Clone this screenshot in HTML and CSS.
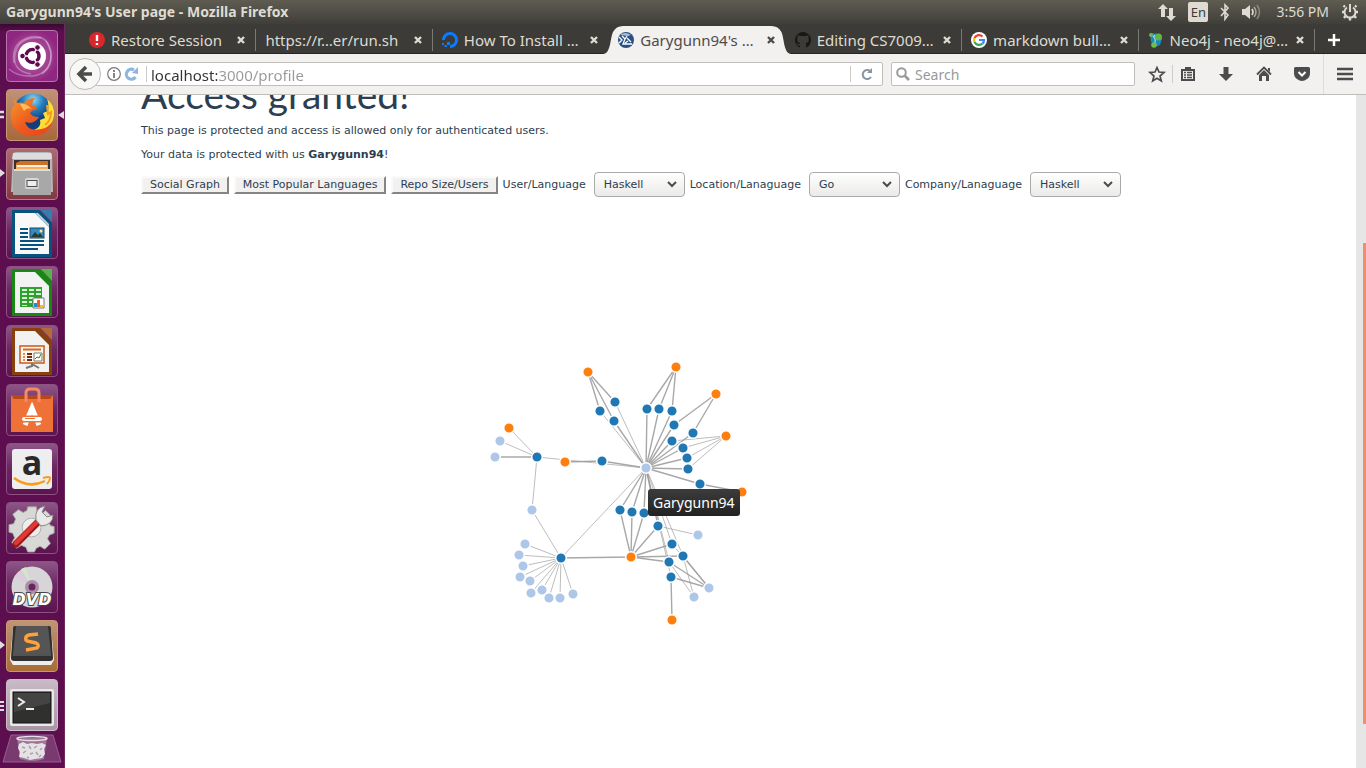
FILE: index.html
```html
<!DOCTYPE html>
<html lang="en">
<head>
<meta charset="utf-8">
<title>Garygunn94's User page</title>
<link rel="stylesheet" href="styles.css">
</head>
<body class="desktop">
<header class="topbar">
  <span class="window-title">Garygunn94's User page - Mozilla Firefox</span>
  <div class="indicators">
    <svg width="18" height="18" viewBox="0 0 18 18" fill="#dfdbd2"><path d="M5 1l5 5H7v8H3V6H0zM13 18l-5-5h3V5h4v8h3z"/></svg>
    <span class="keyboard">En</span>
    <svg width="10" height="18" viewBox="0 0 10 18" fill="none" stroke="#dfdbd2" stroke-width="1.6"><path d="M1 5l7 7-3 4V2l3 3-7 8"/></svg>
    <svg class="volume" width="20" height="18" viewBox="0 0 20 18" fill="none" stroke="#dfdbd2" stroke-width="1.6"><path d="M1 6h3l5-4v14l-5-4H1z" fill="#dfdbd2" stroke="none"/><path d="M11 6q2 3 0 6"/><path d="M13 4q4 5 0 10" opacity=".6"/><path d="M16 2q5 7 0 14" opacity=".4"/></svg>
    <span class="clock">3:56 PM</span>
    <svg width="18" height="18" viewBox="0 0 18 18" fill="none" stroke="#dfdbd2"><path d="M6 4.500a5.500 5.500 0 1 0 6 0" stroke-width="2"/><path d="M9 1v8" stroke-width="2"/><path d="M4 4L2.500 2.500M14 4l1.500-1.500M3 9H1M15 9h2M4.500 13L3 15M13.500 13l1.500 2M9 15v2.500" stroke-width="2.400"/></svg>
  </div>
</header>
<div class="workspace">
  <nav class="launcher" aria-label="Launcher">
    <button class="tile dash" aria-label="Dash"><svg width="50" height="50" viewBox="0 0 50 50"><g fill="none" stroke="#fff" stroke-opacity=".3" stroke-width="1.500"><path d="M7 32Q4 13 20 7Q39 1 44 20"/><path d="M24 43Q5 40 8 23Q12 5 34 7"/><path d="M44 20Q45 42 26 45Q11 46 2 38"/><path d="M39 10Q51 31 35 43"/></g><circle cx="25" cy="25" r="14" fill="#fff"/><circle cx="25.500" cy="25" r="6.500" fill="none" stroke="#5e0b50" stroke-width="3.500"/><path d="M25.500 25L16 25M25.500 25l5-9M25.500 25l5 9" stroke="#fff" stroke-width="1.500"/><circle cx="25.500" cy="25" r="4.500" fill="#fff"/><g fill="#5e0b50" stroke="#fff"><circle cx="15.500" cy="25" r="2.800"/><circle cx="30.500" cy="16.500" r="2.800"/><circle cx="30.500" cy="33.500" r="2.800"/></g></svg></button>
    <button class="tile firefox" aria-label="Firefox"><svg class="mark-left" width="5" height="10"><path d="M0 2h4M0 7h4" stroke="#ddd" stroke-width="2.500"/></svg><svg width="50" height="50" viewBox="0 0 50 50"><defs><radialGradient id="globe" cx=".5" cy=".15"><stop offset="0" stop-color="#8edcf8"/><stop offset=".5" stop-color="#2680bd"/><stop offset="1" stop-color="#123e7d"/></radialGradient><linearGradient id="fox" x2="1" y2="1"><stop offset="0" stop-color="#f79a2c"/><stop offset=".5" stop-color="#ee5b1e"/><stop offset="1" stop-color="#e8401b"/></linearGradient></defs><circle cx="26" cy="24" r="20.500" fill="url(#globe)"/><path d="M40 9q2 5 1 12l-5 2 2 5-5 2q2 7-6 10l8 3q10-6 12-17Q48 15 40 9z" fill="#ffdd39"/><path d="M7 7q-1 4 1 7Q2 21 4 29q2 15 20 17 16 1 22-15-5 7-12 8-13 3-16-7 9 3 14-5-7 0-9-4 2-3 7-4-1-3-5-4 0-4 3-7-7 0-11 5-4-1-6 0Q7 11 7 7z" fill="url(#fox)"/><path d="M13 14q6-1 12 5-5-2-8 2z" fill="#ffbc57"/><path d="M40 15l1 9 3-2q0 9-6 13" stroke="#f79c1a" stroke-width="2" fill="none"/></svg><svg class="mark-right" width="6" height="8"><path d="M6 0v8L0 4z" fill="#ddd"/></svg></button>
    <button class="tile files" aria-label="Files"><svg class="mark-left" width="5" height="8"><path d="M0 0v8l5-4z" fill="#ddd"/></svg><svg width="50" height="50" viewBox="0 0 50 50"><path d="M6 5q1-2 3-2h32q3 0 4 2l1 38H4z" fill="#b7b7b7"/><path d="M6 4h38l1 6H5z" fill="#ddd"/><path d="M7 11h36v12H7z" fill="#3b302b"/><path d="M9 14l4-2h28v11H9z" fill="#d06f28"/><path d="M9 16h32v8H9z" fill="#f5b15a"/><path d="M10 17h30" stroke="#fff0da" stroke-width="2"/><path d="M6 22q0-2 2-2h34q2 0 2 2v24H6z" fill="#a8a8a8"/><path d="M7 21h36" stroke="#ddd" stroke-width="2"/><rect x="18" y="29" width="14" height="11" rx="2" fill="#d7d7d7"/><rect x="20" y="31.500" width="10" height="6" fill="#eee" stroke="#4e4e4e"/></svg></button>
    <button class="tile" aria-label="Writer"><svg width="50" height="50" viewBox="0 0 50 50"><path d="M7 2h26l12 13v34H5V2z" fill="#07527e"/><path d="M8 5h20l14 14v27H8z" fill="#f8f8f8"/><path d="M28 5l14 14V16L31 5z" fill="#b9d3e1"/><path d="M34 2h11v12z" fill="#347db0"/><path d="M13 21h8M13 25h8M13 29h8M13 33h24M13 37h24M13 41h18" stroke="#07527e" stroke-width="2"/><rect x="23" y="20" width="14" height="10" fill="#348bc2" stroke="#174568"/><path d="M24 29l4-5 3 3 2-2 3 4z" fill="#273d32"/><circle cx="34" cy="23" r="1.500" fill="#ffe47c"/></svg></button>
    <button class="tile" aria-label="Calc"><svg width="50" height="50" viewBox="0 0 50 50"><path d="M7 2h26l12 13v34H5V2z" fill="#188815"/><path d="M8 5h20l14 14v27H8z" fill="#f2f2f2"/><path d="M34 2h11v12z" fill="#58b34b"/><path d="M13 20h22v20H13z" fill="#2da12d"/><path d="M15 22h5v2h-5zM22 22h5v2h-5zM29 22h5v2h-5zM15 26h5v2h-5zM22 26h5v2h-5zM29 26h5v2h-5zM15 30h5v2h-5zM22 30h5v2h-5zM15 34h5v2h-5zM22 34h3v2h-3zM15 38h5v1h-5z" fill="#d9f4d7"/><path d="M26 31h11v10H26z" fill="#fff" stroke="#777"/><path d="M27 36h3v4h-3z" fill="#198ed0"/><path d="M30 33h3v7h-3z" fill="#ed6223"/><path d="M33 38h3v2h-3z" fill="#f6be25"/></svg></button>
    <button class="tile" aria-label="Impress"><svg width="50" height="50" viewBox="0 0 50 50"><path d="M7 2h26l12 13v34H5V2z" fill="#88400f"/><path d="M8 5h20l14 14v27H8z" fill="#f2f2f2"/><path d="M34 2h11v12z" fill="#b66b37"/><path d="M13 20h24v17H13z" fill="#fff7ef" stroke="#c8591b" stroke-width="1.500"/><path d="M16 23.500h18" stroke="#d6662c" stroke-width="2"/><path d="M16 28h2M16 31h2M16 34h2" stroke="#e48b5c" stroke-width="2"/><path d="M20 28h5M20 31h5M20 34h5" stroke="#712d13" stroke-width="2"/><path d="M27 27h8v8h-8z" fill="#fff" stroke="#71806e"/><path d="M28 33l2-2 2 1 2-4" fill="none" stroke="#238a34"/><path d="M25 37v3l-6 2M25 38l7 4" fill="none" stroke="#777" stroke-width="2"/></svg></button>
    <button class="tile" aria-label="Ubuntu Software"><svg width="50" height="50" viewBox="0 0 50 50"><path d="M4 10h42v37H4z" fill="#ee7138"/><path d="M4 10h42l-3 4H7z" fill="#b94819"/><path d="M19 17V8q0-4 4-4h5q4 0 4 4v9" fill="none" stroke="#f58b61" stroke-width="3"/><path d="M18 40l7-17 7 17" fill="none" stroke="#fff" stroke-width="5"/><path d="M15 34h20" stroke="#ee7138" stroke-width="7"/><path d="M17 34h16" stroke="#fff" stroke-width="4" stroke-linecap="round"/><path d="M18 33.500h10" stroke="#ee7138"/></svg></button>
    <button class="tile" aria-label="Amazon"><svg width="50" height="50" viewBox="0 0 50 50"><rect x="5" y="5" width="40" height="40" rx="3" fill="#eee"/><text x="25" y="31" text-anchor="middle" class="amazon-mark">a</text><path d="M7 34q15 11 31 3" fill="none" stroke="#fa9d16" stroke-width="2.500"/><path d="M36 34q7-2 7 0 0 3-3 6" fill="none" stroke="#fa9d16" stroke-width="2"/></svg></button>
    <button class="tile" aria-label="System Settings"><svg width="50" height="50" viewBox="0 0 50 50"><g transform="translate(2 1) scale(.94)"><path d="M20 3h9l1 6 4 2 5-4 6 6-3 5 2 5 4 1v7l-5 2-2 4 3 5-6 6-5-3-4 2-2 4h-7l-2-5-5-2-5 3-5-6 3-5-2-5-4-1v-8l5-1 2-5-3-5 6-5 5 3 4-2z" fill="#d8d8d6" stroke="#a5a5a5"/><circle cx="24" cy="25" r="10" fill="#eee" stroke="#aaa"/></g><path d="M9 41L34 16" stroke="#9a1515" stroke-width="7" stroke-linecap="round"/><path d="M9 40L32 17" stroke="#e43732" stroke-width="4.500" stroke-linecap="round"/><path d="M29 17q-2-12 9-14l-3 6 5 5 6-2q0 10-12 11z" fill="#e9e9e7" stroke="#888"/></svg></button>
    <button class="tile" aria-label="DVD"><svg width="50" height="50" viewBox="0 0 50 50"><circle cx="25" cy="25" r="20.500" fill="#d7d5d8"/><path d="M25 25L8 14l7-7z" fill="#dfc9df"/><path d="M25 25L14 7l5-2z" fill="#d0e7c9"/><path d="M25 25L35 43l7-7z" fill="#eee"/><circle cx="25" cy="25" r="7" fill="#a98fa9"/><circle cx="25" cy="25" r="3.500" fill="#6b2461"/><text x="25" y="43" text-anchor="middle" class="dvd-mark">DVD</text></svg></button>
    <button class="tile sublime" aria-label="Sublime Text"><svg class="mark-left" width="5" height="8"><path d="M0 0v8l5-4z" fill="#ddd"/></svg><svg width="50" height="50" viewBox="0 0 50 50"><path d="M6 6h38l3 33-3 5H6l-3-5z" fill="#eee"/><path d="M8 5h34q2 0 2 2l2 30q0 3-3 3H7q-3 0-3-3L6 7q0-2 2-2z" fill="#303030"/><path d="M9 5h32l3 28H6z" fill="#555"/><path d="M6 34h38" stroke="#777"/><path d="M31 13l-9 1q-4 1-3 5l1 1 9 2q4 2 1 5l-11 2" fill="none" stroke="#ffa13b" stroke-width="3.500"/></svg></button>
    <button class="tile terminal" aria-label="Terminal"><svg class="mark-left" width="5" height="12"><path d="M0 2h4M0 6h4M0 10h4" stroke="#ddd" stroke-width="2"/></svg><svg width="50" height="50" viewBox="0 0 50 50"><rect x="3" y="9" width="44" height="37" rx="2" fill="#e9e9e7"/><rect x="6" y="12" width="38" height="31" fill="#30312f" stroke="#111"/><path d="M7 13h36v10L7 32z" fill="#444"/><path d="M11 18l6 4-6 4M19 29h8" fill="none" stroke="#eee" stroke-width="2"/></svg></button>
    <button class="trash" aria-label="Trash"><svg width="60" height="30" viewBox="0 0 60 30"><path d="M9 1h42l8 27H1z" fill="#7a3a70" stroke="#965f8e"/><path d="M15 4h30l-3 21q-12 4-24 0z" fill="#a783a2" opacity=".8"/><path d="M17 10l4-2 4 2 5-1 5 1 5-1 4 2-2 4 1 5-3 4-7 1-5 1-6-2-5-1 1-5-2-4z" fill="#e6e1e5"/><path d="M20 13l3 1M27 12l2 3M35 12l-3 2M40 14l-2 2M21 19l3-2M28 20l3-1M36 21l-2-3M25 23l2 1M39 21l-2 2" fill="none" stroke="#aaa1aa" stroke-width="1.500"/><ellipse cx="30" cy="4.500" rx="15" ry="2" fill="none" stroke="#e3dfe2" stroke-width="1.500"/></svg></button>
  </nav>
  <main class="browser">
    <div class="tabstrip">
      <div class="tab"><svg width="16" height="16" viewBox="0 0 16 16"><circle cx="8" cy="8" r="8" fill="#d9272d"/><path d="M8 3v6M8 11v2" stroke="#fff" stroke-width="2.400"/></svg><span class="tab-label">Restore Session</span><button class="close" aria-label="Close tab"><svg width="8" height="8" viewBox="0 0 8 8"><path d="M1 1l6 6M7 1L1 7"/></svg></button></div>
      <div class="tab"><span class="tab-label">https://r…er/run.sh</span><button class="close" aria-label="Close tab"><svg width="8" height="8" viewBox="0 0 8 8"><path d="M1 1l6 6M7 1L1 7"/></svg></button></div>
      <div class="tab before"><svg width="16" height="16" viewBox="0 0 16 16"><path d="M1.500 8A6.500 6.500 0 1 1 8 14.500" fill="none" stroke="#0a7cff" stroke-width="3"/><path d="M5 10h3v3H5zM2.500 13H5v2H2.500zM0 11h2v2H0z" fill="#0a7cff"/></svg><span class="tab-label">How To Install …</span><button class="close" aria-label="Close tab"><svg width="8" height="8" viewBox="0 0 8 8"><path d="M1 1l6 6M7 1L1 7"/></svg></button></div>
      <div class="tab active"><svg class="tab-shape" viewBox="0 0 188 28" preserveAspectRatio="none"><path d="M0 28C8 28 7 12 10 6Q13 0 20 0H168Q175 0 178 6C181 12 180 28 188 28z" fill="#f2f1f0"/></svg><svg width="16" height="16" viewBox="0 0 16 16"><circle cx="8" cy="8" r="8" fill="#294f83"/><path d="M2 3q5-4 11 0l-3 1z" fill="#a8bed7"/><path d="M1 5l3 3-3 3M4 4l3 3 2-3M7 7l-2 5h9M9 6l4 4M10 9l-3 2" fill="none" stroke="#fff" stroke-width="1.300"/></svg><span class="tab-label">Garygunn94's …</span><button class="close" aria-label="Close tab"><svg width="8" height="8" viewBox="0 0 8 8"><path d="M1 1l6 6M7 1L1 7"/></svg></button></div>
      <div class="tab"><svg width="16" height="16" viewBox="0 0 16 16"><path d="M5 15.500v-2c-3 .5-2.500-2-4-2.500 2-.5 2 1.500 4 1v-1C2 10.500 2 8 2.500 5.500L2.500 3l2.500 1h6l2.500-1v2.500C14 8 14 10.500 11 11v4.500A8 8 0 1 0 5 15.500" fill="#171717"/></svg><span class="tab-label">Editing CS7009…</span><button class="close" aria-label="Close tab"><svg width="8" height="8" viewBox="0 0 8 8"><path d="M1 1l6 6M7 1L1 7"/></svg></button></div>
      <div class="tab"><svg width="16" height="16" viewBox="0 0 16 16"><circle cx="8" cy="8" r="8" fill="#fff"/><g fill="none" stroke-width="2.200"><path d="M11.500 4.500A5 5 0 0 0 3.500 6" stroke="#ea4335"/><path d="M3.500 6a5 5 0 0 0 0 4" stroke="#fbbc05"/><path d="M3.500 10a5 5 0 0 0 8 1.500" stroke="#34a853"/><path d="M8 8h5q0 2.500-1.500 3.500" stroke="#4285f4"/></g></svg><span class="tab-label">markdown bull…</span><button class="close" aria-label="Close tab"><svg width="8" height="8" viewBox="0 0 8 8"><path d="M1 1l6 6M7 1L1 7"/></svg></button></div>
      <div class="tab"><svg width="16" height="16" viewBox="0 0 16 16"><path d="M2 1l10 1 2 5-2 6-5 2-4-5z" fill="#168ac2"/><path d="M5 4q4 4 1 8M10 4q-3 1-4-1" fill="none" stroke="#9fd6df" stroke-width="1.300"/><circle cx="3" cy="3" r="2" fill="#72b74d"/><circle cx="10.500" cy="5" r="3.500" fill="#61b544"/><circle cx="6" cy="13" r="2.800" fill="#75bc4c"/></svg><span class="tab-label">Neo4j - neo4j@…</span><button class="close" aria-label="Close tab"><svg width="8" height="8" viewBox="0 0 8 8"><path d="M1 1l6 6M7 1L1 7"/></svg></button></div>
      <button class="new-tab" aria-label="New tab"><svg width="12" height="12" viewBox="0 0 12 12"><path d="M6 0v12M0 6h12" stroke="#fff" stroke-width="2.500"/></svg></button>
    </div>
    <div class="toolbar">
      <button class="back" aria-label="Back"><svg width="16" height="16" viewBox="0 0 16 16"><path d="M9 1L2 8l7 7M3 8h12" fill="none" stroke="#4c4c4c" stroke-width="3.500"/></svg></button>
      <div class="urlbar">
        <svg width="14" height="14" viewBox="0 0 14 14" fill="none" stroke="#777"><circle cx="7" cy="7" r="6.300" stroke-width="1.200"/><path d="M7 6v5M7 3v2" stroke-width="1.800"/></svg>
        <svg width="14" height="14" viewBox="0 0 14 14"><path d="M10.500 10A5 5 0 1 1 9 3" fill="none" stroke="#8fb6df" stroke-width="3.200"/><path d="M7 6l6-6v7z" fill="#8fb6df"/></svg>
        <span class="url-divider"></span>
        <input class="url-input" type="text" aria-label="Address" value="localhost:3000/profile">
        <button class="reload" aria-label="Reload"><svg width="12" height="12" viewBox="0 0 12 12"><path d="M10 9A4.500 4.500 0 1 1 9 3" fill="none" stroke="#8794a2" stroke-width="2"/><path d="M6 5l5-5v5z" fill="#8794a2"/></svg></button>
      </div>
      <div class="searchbar">
        <svg width="14" height="14" viewBox="0 0 14 14" fill="none" stroke="#999" stroke-width="2"><circle cx="5.500" cy="5.500" r="4.300"/><path d="M9 9l4 4" stroke-width="2.600"/></svg>
        <input class="search-input" type="text" aria-label="Search" placeholder="Search">
      </div>
      <div class="tools">
        <button class="tool star" aria-label="Bookmark"><svg width="16" height="16" viewBox="0 0 16 16"><path d="M8 1.500l2 4.500 5 .5-4 3.500 1.300 5L8 12.300 3.700 15 5 10 1 6.500 6 6z" fill="none" stroke="#4c4c4c" stroke-width="1.700"/></svg></button>
        <button class="tool" aria-label="Bookmarks list"><svg width="16" height="16" viewBox="0 0 16 16"><path d="M1 3h4V1h6v2h4v12H1z" fill="#4c4c4c"/><path d="M3 5h10v8H3z" fill="#f2f1f0"/><path d="M4 6.500h2M7 6.500h5M4 9h2M7 9h5M4 11.500h2M7 11.500h5" stroke="#4c4c4c" stroke-width="1.300"/></svg></button>
        <button class="tool" aria-label="Downloads"><svg width="16" height="16" viewBox="0 0 16 16"><path d="M5.500 1h5v7H15l-7 7-7-7h4.500z" fill="#4c4c4c"/></svg></button>
        <button class="tool" aria-label="Home"><svg width="16" height="16" viewBox="0 0 16 16"><path d="M1 8.500l7-7 7 7" fill="none" stroke="#4c4c4c" stroke-width="1.800"/><path d="M3 9l5-5 5 5v6h-3v-5H6v5H3zM12 2h2v4l-2-2z" fill="#4c4c4c"/></svg></button>
        <button class="tool" aria-label="Pocket"><svg width="16" height="16" viewBox="0 0 16 16"><path d="M1.500 1h13Q16 1 16 2.500V7q0 4-3 6-5 4-10 0-3-2-3-6V2.500Q0 1 1.500 1z" fill="#4c4c4c"/><path d="M4.500 6L8 9.500 11.500 6" fill="none" stroke="#fff" stroke-width="2"/></svg></button>
        <button class="tool menu" aria-label="Menu"><svg width="16" height="16" viewBox="0 0 16 16"><path d="M0 3h16M0 8h16M0 13h16" stroke="#4c4c4c" stroke-width="2.600"/></svg></button>
      </div>
    </div>
    <div class="viewport">
      <article class="page">
        <h1 class="heading">Access granted!</h1>
        <p class="text">This page is protected and access is allowed only for authenticated users.</p>
        <p class="text">Your data is protected with us <strong>Garygunn94</strong>!</p>
        <div class="controls">
          <button class="action">Social Graph</button>
          <button class="action">Most Popular Languages</button>
          <button class="action">Repo Size/Users</button>
          <label for="user-language">User/Language</label>
          <select class="choice" id="user-language"><option>Haskell</option></select>
          <label for="location-language">Location/Lanaguage</label>
          <select class="choice" id="location-language"><option>Go</option></select>
          <label for="company-language">Company/Lanaguage</label>
          <select class="choice" id="company-language"><option>Haskell</option></select>
        </div>
        <div class="graph">
          <svg id="network" width="1139" height="560" viewBox="141 197 1139 560" role="img" aria-label="Social graph"></svg>
          <div class="tooltip" role="tooltip">Garygunn94</div>
        </div>
      </article>
      <div class="scrollbar"><div class="scroll-thumb"></div></div>
    </div>
  </main>
</div>
<script src="graph.js"></script>
</body>
</html>
```
FILE: styles.css
```css
* { box-sizing: border-box; }
button, input, select { font: inherit; color: inherit; margin: 0; }
button { padding: 0; border: 0; background: none; }
svg { display: block; flex: none; overflow: visible; }

.desktop {
  margin: 0;
  height: 100vh;
  overflow: hidden;
  display: flex;
  flex-direction: column;
  font: 14px/20px "Noto Sans", sans-serif;
}

.topbar {
  flex: none;
  height: 24px;
  padding: 0 7px 0 6px;
  display: flex;
  align-items: center;
  justify-content: space-between;
  color: #dfdbd2;
  background: linear-gradient(#5f5d52, #3f3e39);
}
.window-title { font-weight: 700; }
.indicators { display: flex; align-items: center; gap: 12px; }
.keyboard {
  width: 20px;
  height: 20px;
  border-radius: 2px;
  background: #dfdbd2;
  color: #3c3b37;
  text-align: center;
  font-size: 13px;
}
.volume { margin: 0 3px 0 -1px; }

.workspace { flex: 1; min-height: 0; display: flex; }

.launcher {
  flex: none;
  width: 65px;
  padding-top: 6px;
  display: flex;
  flex-direction: column;
  align-items: center;
  gap: 7px;
  background: linear-gradient(#3b0832, #5c0e4e 8px);
  border-right: 1px solid #6d2761;
}
.tile {
  position: relative;
  flex: none;
  width: 52px;
  height: 52px;
  border: 1px solid #8c5284;
  border-radius: 4px;
  background: linear-gradient(#8d5687, #6c2862 45%, #5c1450);
}
.dash { background: radial-gradient(#bd6daf, #8f2680 75%); border-color: #b774ae; }
.firefox { background: linear-gradient(#c09179, #a8683a); border-color: #c69876; }
.files { background: linear-gradient(#aa6b74, #823840); border-color: #b77e85; }
.sublime { background: linear-gradient(#bf9476, #a96c34); border-color: #c69876; }
.terminal { background: linear-gradient(#c9bac7, #a995a6); border-color: #cdbfca; }
.mark-left { position: absolute; left: -7px; top: 20px; }
.mark-right { position: absolute; right: -7px; top: 21px; }
.trash { flex: none; margin-top: -4px; }
.amazon-mark { font: 700 34px/34px "Open Sans", sans-serif; fill: #292929; }
.dvd-mark { font: italic 700 16px/16px "DejaVu Sans", sans-serif; fill: #fff; stroke: #444; stroke-width: 2px; paint-order: stroke; }

.browser { flex: 1; min-width: 0; display: flex; flex-direction: column; }

.tabstrip {
  flex: none;
  height: 30px;
  padding: 2px 13px 0 15px;
  display: flex;
  color: #dfdbd2;
  background: #3c3b37;
  border-bottom: 1px solid #262521;
}
.tab {
  position: relative;
  flex: 1;
  min-width: 0;
  display: flex;
  align-items: center;
  gap: 6px;
  padding: 0 11px 0 9px;
  font-size: 15px;
  background: linear-gradient(#7a7973, #7a7973) right 3px / 1px 22px no-repeat;
}
.tab.before, .tab.active { background: none; }
.tab.active { color: #4c4c4c; margin-bottom: -1px; padding-bottom: 1px; }
.tab.active > * { position: relative; }
.tab.active > .tab-shape { position: absolute; left: -6px; top: 0; width: calc(100% + 12px); height: 28px; }
.tab-label { flex: 1; min-width: 0; white-space: nowrap; }
.close path { fill: none; stroke: currentColor; stroke-width: 2.4; }
.new-tab { width: 38px; display: flex; align-items: center; justify-content: center; }

.toolbar {
  flex: none;
  height: 41px;
  padding-left: 4px;
  display: flex;
  align-items: center;
  background: #f2f1f0;
  border-bottom: 1px solid #bfbdb8;
}
.back {
  flex: none;
  z-index: 1;
  width: 32px;
  height: 32px;
  border: 1px solid #bab8b4;
  border-radius: 50%;
  background: #f8f8f7;
  display: flex;
  align-items: center;
  justify-content: center;
}
.urlbar, .searchbar {
  height: 24px;
  display: flex;
  align-items: center;
  background: #fff;
  border: 1px solid #c0beb9;
  border-radius: 2px;
}
.urlbar { flex: 1; min-width: 0; margin-left: -6px; padding-left: 11px; gap: 4px; }
.url-divider { width: 1px; height: 16px; margin: 0 0 0 3px; background: #ccc; }
.url-input, .search-input { flex: 1; min-width: 0; padding: 2px 0 0; border: 0; outline: 0; background: none; }
.url-input {
  font-size: 15px;
  color: transparent;
  background: linear-gradient(90deg, #333 66px, #999 66px);
  -webkit-background-clip: text;
  background-clip: text;
}
.reload { width: 32px; height: 16px; border-left: 1px solid #ccc; display: flex; align-items: center; justify-content: center; }
.searchbar { width: 244px; margin-left: 8px; padding-left: 4px; gap: 5px; }
.search-input::placeholder { color: #999; opacity: 1; }
.tools { display: flex; align-items: center; padding-left: 14px; }
.tool { width: 38px; height: 40px; display: flex; align-items: center; justify-content: center; }
.tool.star { width: 24px; height: 18px; padding-right: 8px; margin-right: -4px; border-right: 1px solid #ccc; }
.tool.menu { width: 43px; margin-left: 2px; border-left: 1px solid #dddcda; }

.viewport { flex: 1; min-height: 0; overflow: hidden; display: flex; background: #fff; }
.page {
  flex: 1;
  max-width: 1139px;
  margin: -25px auto 0;
  color: #2c3e50;
  font: 11px/16px "DejaVu Sans", sans-serif;
}
.heading { margin: 0; font: 400 39px/48px Lato, sans-serif; }
.text { margin: 0 0 8px; }
.heading + .text { margin-top: 5px; }
.controls { display: flex; align-items: center; gap: 5px; padding-top: 1px; white-space: nowrap; }
.action { height: 18px; padding: 0 7px; border: 2px solid; border-color: #fafafa #858585 #858585 #fafafa; background: #f2f1f0; line-height: 14px; }
.choice {
  appearance: none;
  width: 91px;
  height: 25px;
  margin-left: 3px;
  padding: 0 9px;
  border: 1px solid #aaa;
  border-radius: 4px;
  background: url("data:image/svg+xml,%3Csvg xmlns='http://www.w3.org/2000/svg' width='10' height='7'%3E%3Cpath d='M1 1l4 4 4-4' fill='none' stroke='%234c4c4c' stroke-width='2'/%3E%3C/svg%3E") right 7px center no-repeat, linear-gradient(#fff, #ebeae8);
}
.graph { position: relative; }
.link { stroke: #999; stroke-opacity: .65; }
.link.strong { stroke-width: 1.4px; stroke-opacity: .85; }
.node { stroke: #fff; stroke-width: 1.5px; }
.node.repo { fill: #1f77b4; }
.node.user { fill: #aec7e8; }
.node.language { fill: #ff7f0e; }
.tooltip {
  position: absolute;
  left: 507px;
  top: 292px;
  padding: 4px 5px 3px;
  border-radius: 3px;
  color: #fff;
  background: linear-gradient(#3c3c3c, #222);
  font: 14px/20px "Noto Sans", sans-serif;
}
.scrollbar { flex: none; width: 10px; padding: 148px 0 44px 7px; background: #e6e6e6; }
.scroll-thumb { height: 100%; background: #f08f69; }
```
FILE: graph.js
```js
const nodes = {
  language: [[588,372],[676,367],[716,394],[726,436],[509,428],[565,462],[742,492],[631,557],[672,620]],
  repo: [[615,402],[600,411],[614,421],[647,409],[659,409],[672,411],[674,425],[693,433],[672,441],[683,448],[687,458],[688,469],[700,484],[602,461],[537,457],[620,510],[632,512],[644,513],[658,526],[672,544],[683,556],[669,562],[671,577],[561,558]],
  user: [[646,468],[500,441],[495,457],[532,510],[525,544],[519,555],[523,566],[520,577],[530,581],[531,593],[542,590],[549,598],[560,598],[573,594],[698,535],[709,588],[694,597]]
};
const kinds = { l: "language", r: "repo", u: "user" };
const strong = "l0-r0 l0-r1 l0-r2 r2-u0 l1-r3 l1-r4 l1-r5 l2-r6 l2-r7 r3-u0 r4-u0 r5-u0 r6-u0 r7-u0 r8-u0 r9-u0 r10-u0 r11-u0 r12-u0 r12-l6 l5-r13 r13-u0 r14-u2 r15-u0 r16-u0 r17-u0 r15-l7 r16-l7 r17-l7 r18-l7 r18-u0 r19-l7 r20-l7 r21-l7 r23-l7 r22-l8 r20-u15 r21-u15 r22-u15".split(" ");
const light = "r0-u0 r1-u0 l3-r8 l3-r9 l3-r10 l3-r11 l4-r14 r14-u1 r14-u0 r14-u3 u3-r23 r23-u0 r23-u4 r23-u5 r23-u6 r23-u7 r23-u8 r23-u9 r23-u10 r23-u11 r23-u12 r23-u13 r18-u14 r19-u0 r20-u0 r21-u0 r22-u0 r20-u16 r21-u16 r19-u15".split(" ");
const svg = document.getElementById("network");

function draw(name, attributes) {
  const element = document.createElementNS("http://www.w3.org/2000/svg", name);
  Object.entries(attributes).forEach(([key, value]) => element.setAttribute(key, value));
  svg.appendChild(element);
}
function point(id) {
  return nodes[kinds[id[0]]][Number(id.slice(1))];
}
function drawLinks(links, className) {
  links.forEach(link => {
    const [from, to] = link.split("-").map(point);
    draw("line", { class: className, x1: from[0], y1: from[1], x2: to[0], y2: to[1] });
  });
}
drawLinks(light, "link");
drawLinks(strong, "link strong");
Object.entries(nodes).forEach(([kind, points]) => {
  points.forEach(([cx, cy]) => draw("circle", { class: "node " + kind, cx, cy, r: 5.3 }));
});
```
